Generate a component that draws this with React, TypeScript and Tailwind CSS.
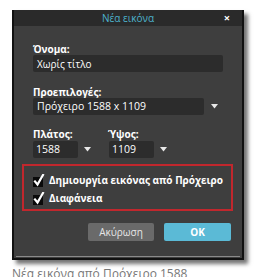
import React from "react";

function Check() {
  return (
    <svg width="13" height="13" viewBox="0 0 13 13" className="shrink-0">
      <rect x="0" y="3" width="10" height="10" fill="#0a0a0a" />
      <path d="M2 7.5 L4.5 10.5 L10 1" stroke="#fff" strokeWidth="2.2" fill="none" strokeLinecap="square" />
    </svg>
  );
}

function Arrow() {
  return (
    <svg width="7" height="5" viewBox="0 0 7 5">
      <path d="M0 0 L7 0 L3.5 4.5 Z" fill="#e8e8e8" />
    </svg>
  );
}

export default function App() {
  const font = { fontFamily: '"Open Sans", "Noto Sans", sans-serif' };
  return (
    <div className="w-[262px] h-[277px] bg-white overflow-hidden pt-[10px] pl-[12px]" style={font}>
      <div className="w-[232px] h-[250px] bg-[#3e3e3e] border-l-2 border-b-2 border-r-2 border-[#111] shadow-[4px_4px_4px_rgba(0,0,0,0.55)] flex flex-col">
        <div className="h-[16px] bg-[#2a2a2a] flex items-center relative">
          <div className="flex-1 text-center text-[10px] leading-none text-[#4db3cc]">Νέα εικόνα</div>
          <div className="absolute right-[12px] top-[2px] text-[11px] leading-none font-bold text-white">×</div>
        </div>
        <div className="flex flex-col pl-[19px] pr-[19px]">
          <div className="mt-[17px] text-[10px] leading-[12px] font-bold text-white">Όνομα:</div>
          <div className="h-[17px] w-[190px] bg-[#2c2c2c] rounded-[2px] flex items-center pl-[4px] text-[10px] text-white leading-none">Χωρίς τίτλο</div>
          <div className="mt-[14px] text-[10px] leading-[12px] font-bold text-white">Προεπιλογές:</div>
          <div className="flex items-center">
            <div className="h-[17px] w-[171px] bg-[#2c2c2c] rounded-[2px] flex items-center pl-[4px] text-[10.5px] text-white leading-none">Πρόχειρο 1588 x 1109</div>
            <div className="ml-[7px]"><Arrow /></div>
          </div>
          <div className="mt-[13px] flex text-[10px] leading-[12px] font-bold text-white">
            <div className="w-[75px]">Πλάτος:</div>
            <div>Ύψος:</div>
          </div>
          <div className="mt-[1px] flex items-center">
            <div className="h-[17px] w-[45px] bg-[#2c2c2c] rounded-[2px] flex items-center pl-[3px] text-[10.5px] text-white leading-none">1588</div>
            <div className="ml-[6px]"><Arrow /></div>
            <div className="ml-[18px] h-[17px] w-[45px] bg-[#2c2c2c] rounded-[2px] flex items-center pl-[3px] text-[10.5px] text-white leading-none">1109</div>
            <div className="ml-[6px]"><Arrow /></div>
          </div>
        </div>
        <div className="ml-[8px] mt-[6px] w-[211px] h-[47px] border-2 border-[#c1272d] flex flex-col pl-[9px] pt-[8px] gap-[5px]">
          <div className="flex items-center gap-[3px] text-[10px] leading-[13px] font-bold text-white whitespace-nowrap">
            <Check />
            <span>Δημιουργία εικόνας από Πρόχειρο</span>
          </div>
          <div className="flex items-center gap-[3px] text-[10px] leading-[13px] font-bold text-white">
            <Check />
            <span>Διαφάνεια</span>
          </div>
        </div>
        <div className="mt-[12px] flex justify-end pr-[11px] gap-[10px]">
          <div className="h-[18px] w-[66px] bg-[#6a6a6a] rounded-[2px] flex items-center justify-center text-[10px] text-[#e6e6e6] leading-none">Ακύρωση</div>
          <div className="h-[18px] w-[67px] bg-[#5bbad6] rounded-[2px] flex items-center justify-center text-[10px] font-bold text-white leading-none">OK</div>
        </div>
        <div className="flex-1" />
        <div className="h-px bg-[#8a8a8a] mx-[2px] mb-[1px]" />
      </div>
      <div className="mt-[8px] text-[12px] leading-none text-[#777] whitespace-nowrap">Νέα εικόνα από Πρόχειρο 1588</div>
    </div>
  );
}
